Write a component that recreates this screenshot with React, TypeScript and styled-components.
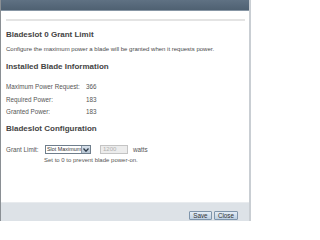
import styled, { createGlobalStyle } from "styled-components"

const GlobalStyle = createGlobalStyle`
  html, body {
    margin: 0;
    padding: 0;
    background: #ffffff;
  }
  body {
    font-family: "Liberation Sans", Arial, sans-serif;
  }
`

const info = [
  { label: "Maximum Power Request:", value: "366" },
  { label: "Required Power:", value: "183" },
  { label: "Granted Power:", value: "183" },
]

export default function App(): JSX.Element {
  return (
    <>
      <GlobalStyle />
      <Dialog>
        <Header />
        <Content>
          <Rule />
          <Title>Bladeslot 0 Grant Limit</Title>
          <Desc>Configure the maximum power a blade will be granted when it requests power.</Desc>
          <SectionTitle>Installed Blade Information</SectionTitle>
          <InfoTable>
            {info.map((row) => (
              <InfoRow key={row.label}>
                <InfoLabel>{row.label}</InfoLabel>
                <InfoValue>{row.value}</InfoValue>
              </InfoRow>
            ))}
          </InfoTable>
          <SectionTitle $gap={5.5}>Bladeslot Configuration</SectionTitle>
          <FormRow>
            <FormLabel>Grant Limit:</FormLabel>
            <Select>
              <SelectText>Slot Maximum</SelectText>
              <SelectArrow>
                <svg width="6" height="4" viewBox="0 0 6 4">
                  <path d="M0.5 0.5 L3 3.2 L5.5 0.5" fill="none" stroke="#2d3b4a" strokeWidth="1.3" />
                </svg>
              </SelectArrow>
            </Select>
            <WattsInput>1200</WattsInput>
            <Unit>watts</Unit>
          </FormRow>
          <Hint>Set to 0 to prevent blade power-on.</Hint>
        </Content>
        <Footer>
          <Button>Save</Button>
          <Button>Close</Button>
        </Footer>
      </Dialog>
    </>
  )
}

const Dialog = styled.div`
  width: 251px;
  height: 221px;
  box-sizing: border-box;
  display: flex;
  flex-direction: column;
  border-left: 1px solid #8a8f94;
  border-right: 2px solid #c9ced3;
  background: #ffffff;
  overflow: hidden;
`

const Header = styled.div`
  height: 10px;
  flex: none;
  background: linear-gradient(#5f7183, #4f6172);
  border-bottom: 1px solid #8796a5;
`

const Content = styled.div`
  flex: 1;
  padding: 8px 4px 0 5px;
  color: #444;
`

const Rule = styled.div`
  height: 2px;
  background: #e4e4e4;
`

const Title = styled.div`
  margin-top: 9px;
  font-size: 8px;
  line-height: 10px;
  font-weight: bold;
  color: #444;
`

const Desc = styled.div`
  margin-top: 5px;
  font-size: 6px;
  line-height: 8px;
  color: #4a4a4a;
  white-space: nowrap;
`

const SectionTitle = styled.div<{ $gap?: number }>`
  margin-top: ${(p) => p.$gap ?? 9}px;
  font-size: 8px;
  line-height: 10px;
  font-weight: bold;
  color: #444;
`

const InfoTable = styled.div`
  margin-top: 9px;
  display: flex;
  flex-direction: column;
`

const InfoRow = styled.div`
  display: grid;
  grid-template-columns: 80px auto;
  font-size: 6.3px;
  line-height: 12.5px;
  color: #555;
  white-space: nowrap;
`

const InfoLabel = styled.span``

const InfoValue = styled.span``

const FormRow = styled.div`
  margin-top: 11px;
  display: flex;
  align-items: center;
  height: 9px;
  font-size: 6.3px;
  color: #555;
  white-space: nowrap;
`

const FormLabel = styled.span`
  width: 39px;
  flex: none;
`

const Select = styled.div`
  width: 46px;
  height: 9px;
  flex: none;
  box-sizing: border-box;
  display: flex;
  align-items: stretch;
  border: 1px solid #6f7e8c;
  background: #fff;
`

const SelectText = styled.span`
  flex: 1;
  min-width: 0;
  white-space: nowrap;
  padding-left: 1px;
  font-size: 5.4px;
  line-height: 7px;
  color: #333;
`

const SelectArrow = styled.span`
  width: 8px;
  flex: none;
  display: flex;
  align-items: center;
  justify-content: center;
  background: linear-gradient(#d9e2ec, #b7c5d3);
  border-left: 1px solid #8a99a8;
`

const WattsInput = styled.div`
  margin-left: 9px;
  width: 28px;
  height: 9px;
  flex: none;
  box-sizing: border-box;
  border: 1px solid #c4c4c4;
  background: #ececec;
  color: #b0b0b0;
  font-size: 6px;
  line-height: 7px;
  padding-left: 2px;
`

const Unit = styled.span`
  margin-left: 5px;
`

const Hint = styled.div`
  margin-top: 2px;
  margin-left: 38px;
  font-size: 6px;
  line-height: 8px;
  color: #555;
  white-space: nowrap;
`

const Footer = styled.div`
  height: 19px;
  flex: none;
  box-sizing: border-box;
  display: flex;
  justify-content: flex-end;
  align-items: flex-start;
  gap: 2px;
  padding: 8px 11px 0 0;
  background: #dde2e7;
  border-top: 1px solid #e8ebee;
`

const Button = styled.button`
  height: 9px;
  padding: 0 3px;
  min-width: 23px;
  box-sizing: border-box;
  border: 1px solid #7f95ab;
  border-radius: 1px;
  background: linear-gradient(#e4edf6, #bccfe2);
  color: #333;
  font-family: "Liberation Sans", Arial, sans-serif;
  font-size: 6.3px;
  line-height: 7px;
`
